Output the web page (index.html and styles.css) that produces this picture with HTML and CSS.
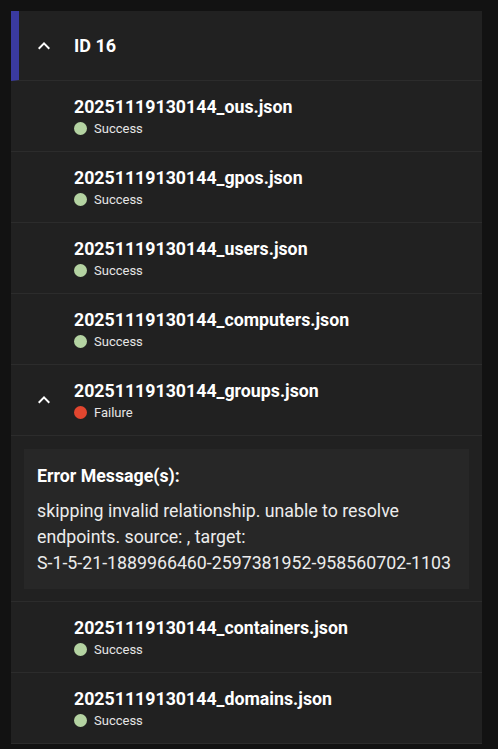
FILE: index.html
```html
<!DOCTYPE html>
<html lang="en">
<head>
  <meta charset="UTF-8">
  <meta name="viewport" content="width=device-width, initial-scale=1.0">
  <link rel="stylesheet" href="styles.css">
  <title>Ingest ID 16</title>
</head>
<body>
  <div class="card">
    <div class="job-header">
      <span class="chevron">
        <svg viewBox="0 0 24 24" width="24" height="24"><path d="M12 8l-6 6 1.41 1.41L12 10.83l4.59 4.58L18 14z" fill="#fff"/></svg>
      </span>
      <span class="job-title">ID 16</span>
    </div>

    <div class="file-row">
      <span class="chevron"></span>
      <div class="file-info">
        <div class="file-name">20251119130144_ous.json</div>
        <div class="status"><span class="dot ok"></span>Success</div>
      </div>
    </div>
    <div class="file-row">
      <span class="chevron"></span>
      <div class="file-info">
        <div class="file-name">20251119130144_gpos.json</div>
        <div class="status"><span class="dot ok"></span>Success</div>
      </div>
    </div>
    <div class="file-row">
      <span class="chevron"></span>
      <div class="file-info">
        <div class="file-name">20251119130144_users.json</div>
        <div class="status"><span class="dot ok"></span>Success</div>
      </div>
    </div>
    <div class="file-row">
      <span class="chevron"></span>
      <div class="file-info">
        <div class="file-name">20251119130144_computers.json</div>
        <div class="status"><span class="dot ok"></span>Success</div>
      </div>
    </div>
    <div class="file-row">
      <span class="chevron">
        <svg viewBox="0 0 24 24" width="24" height="24"><path d="M12 8l-6 6 1.41 1.41L12 10.83l4.59 4.58L18 14z" fill="#fff"/></svg>
      </span>
      <div class="file-info">
        <div class="file-name">20251119130144_groups.json</div>
        <div class="status"><span class="dot fail"></span>Failure</div>
      </div>
    </div>
    <div class="file-details">
      <div class="error-box">
        <div class="error-title">Error Message(s):</div>
        <div class="error-text">skipping invalid relationship. unable to resolve endpoints. source: , target: <span class="sid">S-1-5-21-1889966460-2597381952-958560702-1103</span></div>
      </div>
    </div>
    <div class="file-row">
      <span class="chevron"></span>
      <div class="file-info">
        <div class="file-name">20251119130144_containers.json</div>
        <div class="status"><span class="dot ok"></span>Success</div>
      </div>
    </div>
    <div class="file-row">
      <span class="chevron"></span>
      <div class="file-info">
        <div class="file-name">20251119130144_domains.json</div>
        <div class="status"><span class="dot ok"></span>Success</div>
      </div>
    </div>
  </div>
</body>
</html>
```

FILE: styles.css
```css
* {
  box-sizing: border-box;
}
body {
  margin: 0;
  background-color: #121212;
  font-family: Roboto, "Liberation Sans", sans-serif;
  color: #fff;
  padding: 11px 16px 0 11px;
}
.card {
  background-color: #212121;
}
.job-header {
  display: flex;
  align-items: center;
  height: 70px;
  border-left: 8px solid #3a3aa0;
  border-bottom: 1px solid #2c2c2c;
  padding-left: 13px;
}
.chevron {
  width: 24px;
  height: 24px;
  flex-shrink: 0;
  display: flex;
}
.job-title {
  margin-left: 18px;
  font-size: 18px;
  font-weight: 700;
}
.file-row {
  display: flex;
  align-items: center;
  height: 71px;
  border-bottom: 1px solid #2c2c2c;
  padding-left: 21px;
}
.file-info {
  margin-left: 18px;
  padding-top: 1px;
}
.file-name {
  font-size: 17.75px;
  font-weight: 700;
  line-height: 24px;
}
.status {
  display: flex;
  align-items: center;
  font-size: 13px;
  line-height: 20px;
  color: #e6e6e6;
}
.dot {
  width: 13px;
  height: 13px;
  border-radius: 50%;
  margin-right: 7px;
}
.dot.ok {
  background-color: #b4d3a2;
}
.dot.fail {
  background-color: #e2462f;
}
.file-details {
  padding: 13px 13px 12px;
  border-bottom: 1px solid #2c2c2c;
}
.error-box {
  background-color: #272727;
  padding: 14px 13px 13px;
}
.error-title {
  font-size: 17.75px;
  font-weight: 700;
  line-height: 26px;
  margin-bottom: 9px;
}
.error-text {
  font-size: 17.75px;
  line-height: 26px;
  color: #ececec;
}
.sid {
  white-space: nowrap;
}
```
